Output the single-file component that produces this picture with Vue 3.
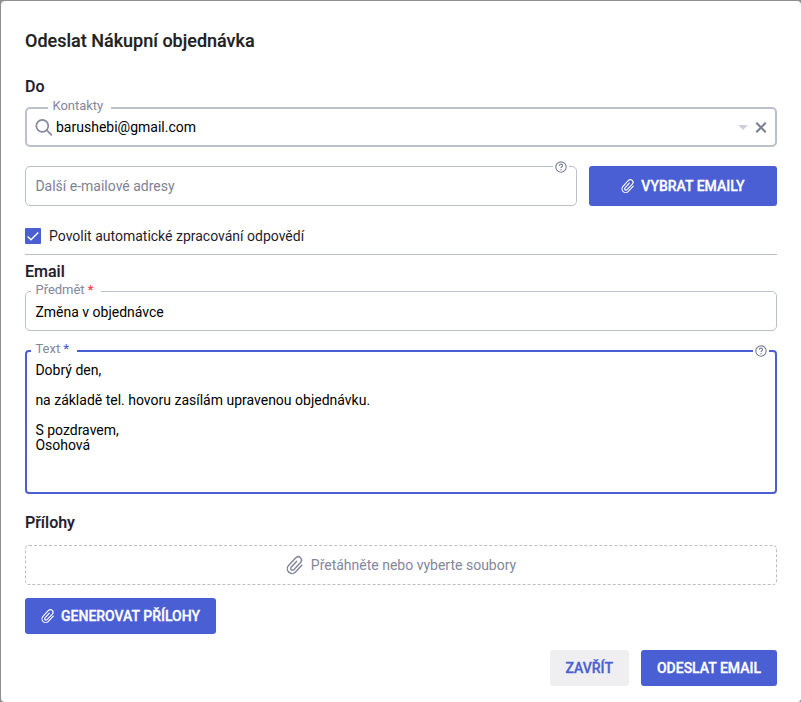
<template>
  <div class="backdrop">
    <div class="dialog">
      <h1 class="title">Odeslat Nákupní objednávka</h1>

      <h2 class="section">Do</h2>
      <div class="field field-contacts">
        <span class="field-label label-contacts">Kontakty</span>
        <svg class="search" viewBox="0 0 18 18">
          <circle cx="7.3" cy="7.8" r="6" />
          <path d="M11.7 12.2L16.8 17.3" />
        </svg>
        <span class="value">{{ contact }}</span>
        <svg class="caret" viewBox="0 0 10 5"><path d="M0 0h10L5 5z" /></svg>
        <svg class="clear" viewBox="0 0 12 12"><path d="M1.3 1.8l9.4 9.4M10.7 1.8l-9.4 9.4" /></svg>
      </div>

      <div class="row">
        <div class="field field-extra">
          <span class="placeholder">Další e-mailové adresy</span>
          <span class="help">
            <svg viewBox="0 0 12 12"><circle cx="6" cy="6" r="5.2" /><path :d="questionPath" /></svg>
          </span>
        </div>
        <button class="btn btn-pick">
          <svg class="clip" viewBox="-8 -8 16 16"><path :d="clipPath" transform="rotate(43)" /></svg>
          VYBRAT EMAILY
        </button>
      </div>

      <label class="check">
        <span class="check-box">
          <svg viewBox="0 0 16 16"><path d="M2.6 8.5L6 11.8L13.3 4.5" /></svg>
        </span>
        Povolit automatické zpracování odpovědí
      </label>

      <hr class="divider">

      <h2 class="section section-email">Email</h2>
      <div class="field field-subject">
        <span class="field-label">Předmět <b class="star-red">*</b></span>
        <span class="value">{{ subject }}</span>
      </div>

      <div class="field field-text">
        <span class="field-label">Text <b class="star-blue">*</b></span>
        <span class="help">
          <svg viewBox="0 0 12 12"><circle cx="6" cy="6" r="5.2" /><path :d="questionPath" /></svg>
        </span>
        <div class="message">{{ message }}</div>
      </div>

      <h2 class="section section-files">Přílohy</h2>
      <div class="dropzone">
        <svg class="clip clip-lg" viewBox="-8 -8 16 16"><path :d="clipPath" transform="rotate(43)" /></svg>
        Přetáhněte nebo vyberte soubory
      </div>
      <button class="btn btn-generate">
        <svg class="clip" viewBox="-8 -8 16 16"><path :d="clipPath" transform="rotate(43)" /></svg>
        GENEROVAT PŘÍLOHY
      </button>

      <div class="footer">
        <button class="btn btn-light">ZAVŘÍT</button>
        <button class="btn btn-send">ODESLAT EMAIL</button>
      </div>
    </div>
  </div>
</template>

<script setup>
import { ref } from 'vue'

const contact = ref('barushebi@gmail.com')
const subject = ref('Změna v objednávce')
const message = ref(`Dobrý den,

na základě tel. hovoru zasílám upravenou objednávku.

S pozdravem,
Osohová`)

const clipPath = 'M4.5-4V4.2A4.2 4.2 0 0 1-3.9 4.2V-5A3 3 0 0 1 2.1-5V3.8A1.6 1.6 0 0 1-1.1 3.8V-3.4'
const questionPath = 'M4.4 4.8C4.4 2.6 7.7 2.7 7.6 4.7C7.5 5.8 6 5.8 6 7.1M6 8.1v1.1'
</script>

<style>
body { background: #8f8f91; }
</style>

<style scoped>
.backdrop {
  height: 702px;
  padding: 1px 0 0 1px;
  box-sizing: border-box;
  overflow: hidden;
  background: #8f8f91;
}

.dialog {
  height: 701px;
  padding: 28px 24px 0;
  box-sizing: border-box;
  border-radius: 4px;
  background: #fff;
  font-family: Roboto, "Liberation Sans", sans-serif;
  font-size: 14px;
  color: #1f1b2e;
}

.title {
  margin: 0 0 24px;
  font-size: 18px;
  line-height: 24px;
  font-weight: 500;
  color: #212121;
  -webkit-text-stroke: 0.15px currentColor;
}

.section {
  margin: 0 0 10px;
  font-size: 16px;
  line-height: 20px;
  font-weight: 500;
  -webkit-text-stroke: 0.15px currentColor;
}

.field {
  position: relative;
  display: flex;
  align-items: center;
  height: 40px;
  padding: 0 9.4px;
  box-sizing: border-box;
  border: 1px solid #bcbfcc;
  border-radius: 5px;
  color: #000;
}

/* Etiqueta sobre el borde */
.field-label {
  position: absolute;
  top: -10px;
  left: 5px;
  padding: 0 8px 0 4.5px;
  background: #fff;
  font-size: 13px;
  line-height: 16px;
  letter-spacing: -0.03px;
  color: #84869c;
}
.field-label b { font-weight: 500; }
.star-red { color: #f0404f; }
.star-blue { color: #4a5fd3; }

.help {
  position: absolute;
  top: -6px;
  right: 7px;
  width: 16px;
  height: 12px;
  background: #fff;
  display: flex;
  justify-content: center;
}
.help svg {
  width: 12px;
  height: 12px;
  fill: none;
  stroke: #7e8299;
  stroke-width: 1.15;
}

.field-contacts {
  border-width: 2px;
  margin-bottom: 19px;
  padding: 0 8px;
}
.field-contacts .label-contacts {
  top: -11px;
  left: 21px;
}
.search {
  width: 18px;
  height: 18px;
  margin-right: 3px;
  fill: none;
  stroke: #8689a0;
  stroke-width: 1.7;
}
.caret {
  width: 10px;
  height: 5px;
  margin-top: 1px;
  margin-left: auto;
  margin-right: 7px;
  fill: #ced0d9;
}
.clear {
  width: 12px;
  height: 12px;
  stroke: #7a8091;
  stroke-width: 2.2;
}

.row {
  display: flex;
  gap: 12px;
}
.field-extra { width: 552px; }
.placeholder { color: #7e8196; }

.btn {
  display: flex;
  align-items: center;
  justify-content: center;
  height: 36px;
  padding: 0 16px;
  border: 0;
  border-radius: 3px;
  background: #4a5fd3;
  color: #fff;
  font-family: inherit;
  font-size: 14px;
  font-weight: 500;
  white-space: nowrap;
  -webkit-text-stroke: 0.3px currentColor;
}
.btn-pick {
  flex: 1;
  height: 40px;
}

.clip {
  width: 14px;
  height: 14px;
  margin-right: 6px;
  overflow: visible;
  fill: none;
  stroke: currentColor;
  stroke-width: 1.3;
  stroke-linecap: round;
}
.clip-lg {
  width: 18px;
  height: 18px;
  margin-right: 7px;
}

.check {
  display: flex;
  align-items: center;
  gap: 8px;
  height: 16px;
  margin-top: 22px;
}
.check-box {
  width: 16px;
  height: 16px;
  border-radius: 1px;
  background: #4a5fd3;
}
.check-box svg {
  display: block;
  fill: none;
  stroke: #fff;
  stroke-width: 1.4;
}

.divider {
  height: 1px;
  margin: 10px 0 7px;
  border: 0;
  background: #bcbfcc;
}

.section-email { margin-bottom: 9px; }
.field-subject { margin-bottom: 19px; }
.field-subject .value { padding-top: 2px; }

.field-text {
  height: 144px;
  align-items: flex-start;
  padding: 11px 8.4px;
  border: 2px solid #4a5fd3;
  border-radius: 4px;
}
.field-text .field-label {
  top: -11px;
  left: 4px;
}
.field-text .help {
  top: -7px;
  right: 6px;
}
.message {
  white-space: pre-line;
  line-height: 15px;
}

.section-files { margin: 19px 0 12px; }
.dropzone {
  display: flex;
  align-items: center;
  justify-content: center;
  height: 40px;
  margin-bottom: 13px;
  box-sizing: border-box;
  border: 1px dashed #bdbec4;
  border-radius: 4px;
  color: #84869c;
}

.footer {
  display: flex;
  justify-content: flex-end;
  gap: 12px;
  margin-top: 16px;
}
.btn-light {
  background: #efeff1;
  color: #4a5fd3;
}
</style>
